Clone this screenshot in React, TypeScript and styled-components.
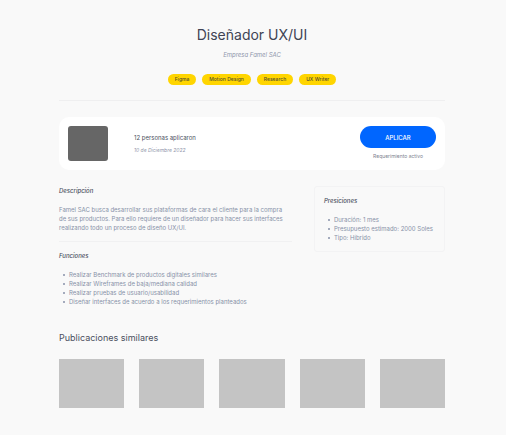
import React from "react";
import styled, { createGlobalStyle } from "styled-components";

const GlobalStyle = createGlobalStyle`
  *, *::before, *::after { box-sizing: border-box; }
  body {
    margin: 0;
    background: #f9f9f9;
    color: #4a4f5e;
    font-family: Inter, "Liberation Sans", sans-serif;
    font-size: 6px;
    line-height: 9px;
  }
  h1, h2, h3, p, ul { margin: 0; padding: 0; font-weight: 400; }
`;

const Page = styled.main`
  padding: 24px 61px 26px 59px;
`;

const Header = styled.header`
  display: flex;
  flex-direction: column;
  align-items: center;
  padding-bottom: 15px;
  border-bottom: 1px solid #efeff0;
`;

const Title = styled.h1`
  font-size: 14px;
  line-height: 22px;
  color: #404454;
`;

const Note = styled.p<{ $size?: number }>`
  font-size: ${({ $size = 6 }) => $size}px;
  font-style: italic;
  color: #8f96ab;
`;

const Company = styled(Note)`
  margin-top: 4px;
`;

const Tags = styled.ul`
  display: flex;
  flex-wrap: wrap;
  justify-content: center;
  gap: 6px;
  margin-top: 15px;
  list-style: none;
`;

const Tag = styled.li`
  padding: 1px 7px;
  border-radius: 6px;
  background: #ffd500;
  color: #55502f;
  font-size: 5px;
  font-weight: 500;
`;

const Summary = styled.section`
  display: flex;
  align-items: center;
  margin-top: 16px;
  padding: 9px;
  border-radius: 10px;
  background: #fff;
`;

const Logo = styled.div`
  width: 40px;
  height: 35px;
  border-radius: 3px;
  background: #666;
`;

const Applicants = styled.div`
  flex: 1;
  display: flex;
  flex-direction: column;
  gap: 4px;
  margin-left: 26px;
`;

const Count = styled.p`
  font-size: 6px;
`;

const Action = styled.div`
  display: flex;
  flex-direction: column;
  align-items: center;
  gap: 4px;
`;

const ApplyButton = styled.button`
  width: 76px;
  height: 22px;
  padding: 0;
  border: 0;
  border-radius: 11px;
  background: #06f;
  color: #fff;
  font: 500 6px/9px Inter, "Liberation Sans", sans-serif;
  cursor: pointer;
`;

const Status = styled.p`
  font-size: 5px;
  color: #7d8290;
`;

const Columns = styled.div`
  display: grid;
  grid-template-columns: minmax(0, 16fr) minmax(0, 9fr);
  align-items: start;
  gap: 22px;
  margin-top: 16px;
`;

const Block = styled.section`
  display: flex;
  flex-direction: column;
  gap: 10px;

  & + & {
    margin-top: 9px;
    padding-top: 9px;
    border-top: 1px solid #f1f1f2;
  }
`;

const Heading = styled.h3`
  font-size: 6px;
  font-style: italic;
  font-weight: 500;
`;

const Text = styled.p`
  padding-right: 3px;
  color: #8791a8;
`;

const Bullets = styled.ul`
  padding-left: 4px;
  list-style: none;
  color: #8791a8;
`;

const Bullet = styled.li`
  display: flex;
  align-items: center;
  gap: 4px;

  &::before {
    content: "";
    width: 2px;
    height: 2px;
    border-radius: 1px;
    background: #8791a8;
  }
`;

const Terms = styled.aside`
  display: flex;
  flex-direction: column;
  gap: 10px;
  padding: 9px;
  border: 1px solid #f3f3f4;
  border-radius: 3px;
`;

const Similar = styled.section`
  margin-top: 24px;
`;

const SimilarTitle = styled.h2`
  font-size: 9px;
  line-height: 16px;
`;

const Cards = styled.div`
  display: grid;
  grid-template-columns: repeat(5, 1fr);
  gap: 15px;
  margin-top: 13px;
`;

const Card = styled.div`
  height: 49px;
  background: #c4c4c4;
`;

const tags = ["Figma", "Motion Design", "Research", "UX Writer"];
const duties = [
  "Realizar Benchmark de productos digitales similares",
  "Realizar Wireframes de baja/mediana calidad",
  "Realizar pruebas de usuario/usabilidad",
  "Diseñar interfaces de acuerdo a los requerimientos planteados",
];
const terms = ["Duración: 1 mes", "Presupuesto estimado: 2000 Soles", "Tipo: Híbrido"];
const similar = [1, 2, 3, 4, 5];

export default function App() {
  return (
    <>
      <GlobalStyle />
      <Page>
        <Header>
          <Title>Diseñador UX/UI</Title>
          <Company>Empresa Famel SAC</Company>
          <Tags>
            {tags.map((tag) => (
              <Tag key={tag}>{tag}</Tag>
            ))}
          </Tags>
        </Header>

        <Summary>
          <Logo />
          <Applicants>
            <Count>12 personas aplicaron</Count>
            <Note $size={5}>10 de Diciembre 2022</Note>
          </Applicants>
          <Action>
            <ApplyButton type="button">APLICAR</ApplyButton>
            <Status>Requerimiento activo</Status>
          </Action>
        </Summary>

        <Columns>
          <div>
            <Block>
              <Heading>Descripción</Heading>
              <Text>
                Famel SAC busca desarrollar sus plataformas de cara el cliente para la compra de sus
                productos. Para ello requiere de un diseñador para hacer sus interfaces realizando
                todo un proceso de diseño UX/UI.
              </Text>
            </Block>
            <Block>
              <Heading>Funciones</Heading>
              <Bullets>
                {duties.map((duty) => (
                  <Bullet key={duty}>{duty}</Bullet>
                ))}
              </Bullets>
            </Block>
          </div>
          <Terms>
            <Heading>Presiciones</Heading>
            <Bullets>
              {terms.map((term) => (
                <Bullet key={term}>{term}</Bullet>
              ))}
            </Bullets>
          </Terms>
        </Columns>

        <Similar>
          <SimilarTitle>Publicaciones similares</SimilarTitle>
          <Cards>
            {similar.map((id) => (
              <Card key={id} />
            ))}
          </Cards>
        </Similar>
      </Page>
    </>
  );
}
